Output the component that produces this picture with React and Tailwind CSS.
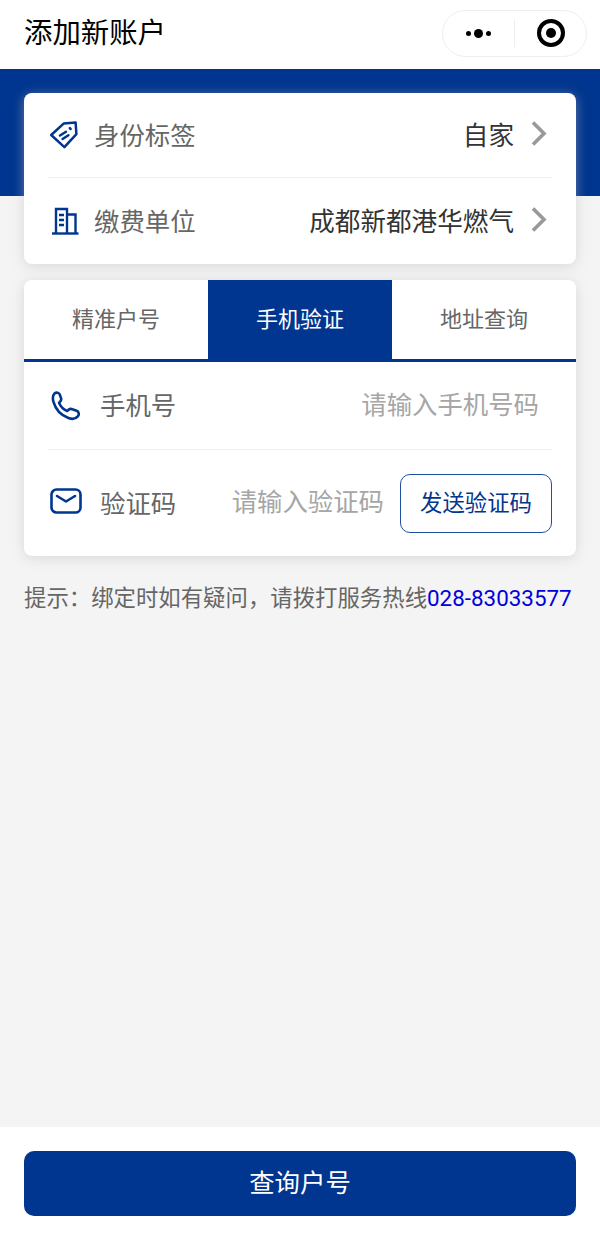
import { useState } from "react";

const NAVY = "#00368f";

function TagIcon() {
  return (
    <svg width="30" height="30" viewBox="0 0 30 30" fill="none" stroke="#00368f" strokeWidth="2.5" strokeLinejoin="round" strokeLinecap="round">
      <path d="M2.2 15 L14.6 3.6 L26.6 2.4 L27.4 14.2 L15.4 27.2 Z" />
      <path d="M20.8 8.2 L21.6 9" />
      <path d="M11 15.5 L17 11.8" />
      <path d="M13.6 19 L19.4 15.2" />
    </svg>
  );
}

function BuildingIcon() {
  return (
    <svg width="28" height="28" viewBox="0 0 28 28" fill="none" stroke="#00368f" strokeWidth="2.4">
      <path d="M1 26.5 H27.5" />
      <path d="M5 26.5 V2 H16 V26.5" />
      <path d="M16 7.5 H24.5 V26.5" />
      <path d="M8 8 H13 M8 13 H13 M8 18 H13" />
    </svg>
  );
}

function PhoneIcon() {
  return (
    <svg width="30" height="30" viewBox="0 0 30 30" fill="none" stroke="#00368f" strokeWidth="2.6" strokeLinejoin="round">
      <path d="M3.4 2.6 C5.4 1 8 1.6 8.8 3.6 L10 7.2 C10.6 8.8 10 10 8.8 11 L8 11.8 C9.6 15.6 12.6 18.6 16.2 20 L17.4 18.8 C18.6 17.8 20 17.6 21.4 18.2 L25.6 19.8 C28 20.8 28.4 23.6 26.8 25.4 C24.8 27.8 21 28.4 17.4 27 C10 24.2 4.4 17.8 2.4 10.6 C1.6 7.4 1.8 4.2 3.4 2.6 Z" />
    </svg>
  );
}

function MailIcon() {
  return (
    <svg width="32" height="26" viewBox="0 0 32 26" fill="none" stroke="#00368f" strokeWidth="2.6" strokeLinecap="round" strokeLinejoin="round">
      <rect x="1.5" y="1.5" width="29" height="23" rx="5" />
      <path d="M7 8 L16 13.5 L25 8" />
    </svg>
  );
}

function Chevron() {
  return (
    <svg width="20" height="28" viewBox="0 0 20 28" fill="none" stroke="#999999" strokeWidth="3.6">
      <path d="M4 2.5 L15 13.5 L4 24.5" />
    </svg>
  );
}

function SelectRow({ icon, label, value, border, iconClass }) {
  return (
    <div className={`mx-6 flex items-center ${border ? "h-[85px] border-b border-[#f2f2f2]" : "h-[86px]"}`}>
      <div className={`w-[46px] shrink-0 ${iconClass}`}>{icon}</div>
      <span className="pt-[3px] text-[25.4px] text-[#666666]">{label}</span>
      <span className="ml-auto pt-[3px] text-[25.6px] text-[#333333]">{value}</span>
      <div className="ml-[15px] mb-[2px] mr-[3px]">
        <Chevron />
      </div>
    </div>
  );
}

export default function App() {
  const [tab] = useState(1);
  const tabs = ["精准户号", "手机验证", "地址查询"];

  return (
    <div className="min-h-[1240px] flex flex-col bg-[#f4f4f4] font-['Roboto','Noto_Sans_CJK_SC',sans-serif]">
      {/* 顶部导航 */}
      <div className="h-[69px] bg-white flex items-center justify-between pl-6 pr-[13px]">
        <h1 className="text-[28.4px] text-black font-normal">添加新账户</h1>
        <div className="w-[145px] h-[47px] mb-[3px] rounded-full border border-[#eeeeee] flex items-center">
          <div className="w-[71px] flex items-center justify-center gap-[3px]">
            <span className="w-[5px] h-[5px] rounded-full bg-black"></span>
            <span className="w-[9px] h-[9px] rounded-full bg-black"></span>
            <span className="w-[5px] h-[5px] rounded-full bg-black"></span>
          </div>
          <div className="w-px h-[28px] bg-[#eeeeee]"></div>
          <div className="flex-1 flex justify-center">
            <div className="w-[28px] h-[28px] rounded-full border-[4px] border-black flex items-center justify-center">
              <span className="w-[10px] h-[10px] rounded-full bg-black"></span>
            </div>
          </div>
        </div>
      </div>

      <div className="h-[127px] bg-[#00368f]"></div>

      {/* 选择卡片 */}
      <div className="mx-6 -mt-[103px] bg-white rounded-lg shadow-[0_2px_12px_rgba(190,190,190,0.5)]">
        <SelectRow icon={<TagIcon />} iconClass="pl-[1px]" label="身份标签" value="自家" border />
        <SelectRow icon={<BuildingIcon />} iconClass="pl-[3px]" label="缴费单位" value="成都新都港华燃气" />
      </div>

      {/* 查询方式 */}
      <div className="mx-6 mt-4 h-[276px] bg-white rounded-lg overflow-hidden shadow-[0_2px_12px_rgba(190,190,190,0.5)]">
        <div className="flex h-[82px] border-b-[3px] border-[#00368f]">
          {tabs.map((t, i) => (
            <div
              key={t}
              className={`flex-1 flex items-center justify-center text-[22px] ${i === tab ? "bg-[#00368f] text-white" : "text-[#666666]"}`}
            >
              {t}
            </div>
          ))}
        </div>

        <div className="mx-6 h-[88px] flex items-center border-b border-[#f2f2f2]">
          <div className="w-[52px] shrink-0 pl-[3px]">
            <PhoneIcon />
          </div>
          <span className="pt-[2px] text-[25.4px] text-[#666666]">手机号</span>
          <span className="ml-auto mr-[13px] mb-[1px] text-[25.4px] text-[#a6a6a6]">请输入手机号码</span>
        </div>

        <div className="mx-6 h-[106px] flex items-center">
          <div className="w-[52px] shrink-0 pl-[2px] mb-[5px]">
            <MailIcon />
          </div>
          <span className="pt-[3px] text-[25.4px] text-[#666666]">验证码</span>
          <span className="ml-auto mr-[16px] mb-[1px] text-[25.4px] text-[#a6a6a6]">请输入验证码</span>
          <button className="w-[152px] h-[59px] pt-[2px] rounded-[10px] border border-[#1f4f9f] text-[22.4px] text-[#00368f]">
            发送验证码
          </button>
        </div>
      </div>

      <p className="mx-6 mt-[26px] text-[22.4px] leading-[32px] whitespace-nowrap text-[#666666]">
        提示：绑定时如有疑问，请拨打服务热线<span className="text-[#0000dd]">028-83033577</span>
      </p>

      <div className="flex-1"></div>

      {/* 底部按钮 */}
      <div className="h-[113px] bg-white px-6 pt-6">
        <button style={{ backgroundColor: NAVY }} className="w-full h-[65px] rounded-[10px] text-[25.4px] text-white">
          查询户号
        </button>
      </div>
    </div>
  );
}
